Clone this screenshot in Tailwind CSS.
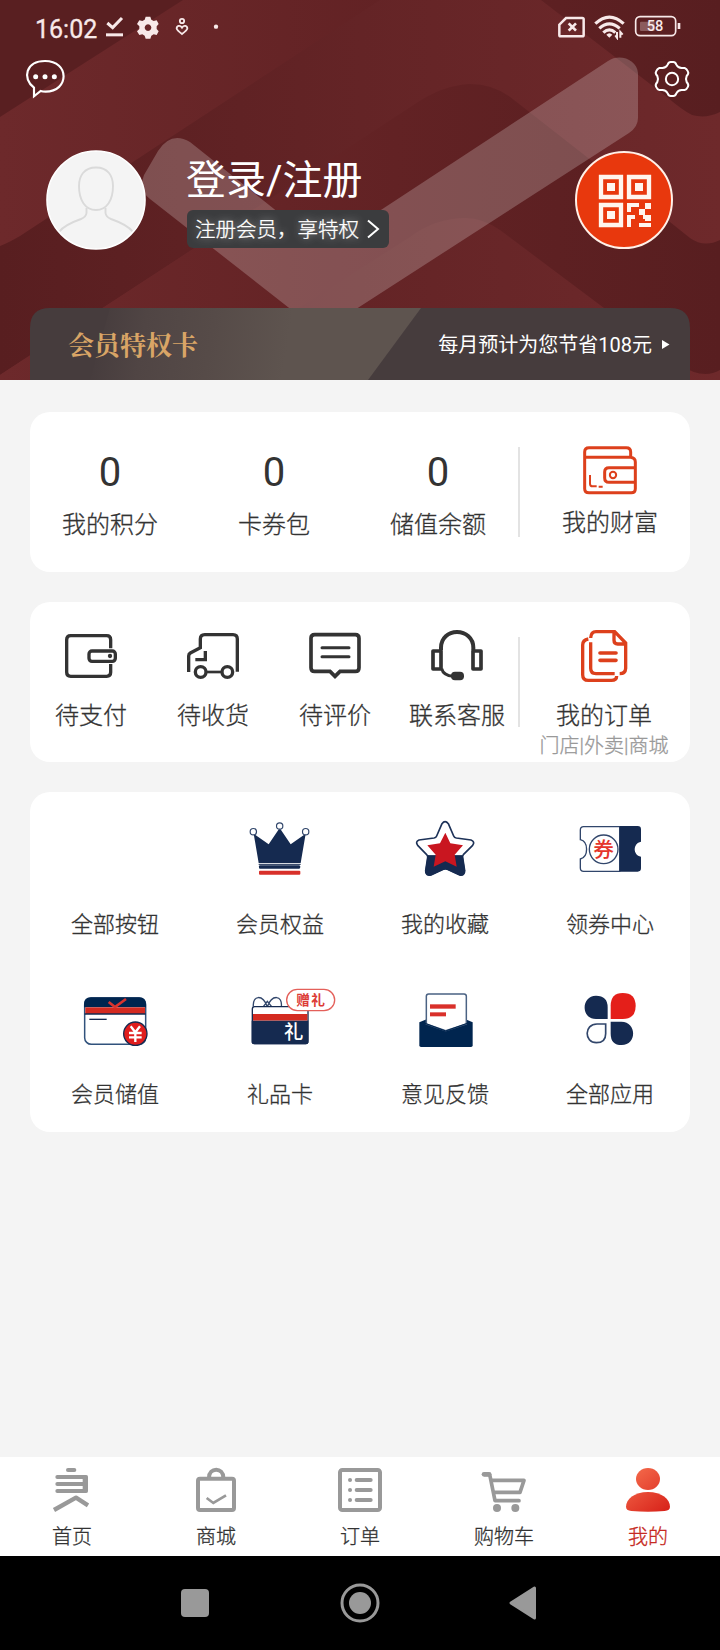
<!DOCTYPE html>
<html lang="zh-CN">
<head>
<meta charset="utf-8">
<title>我的</title>
<script src="https://cdn.jsdelivr.net/npm/@tailwindcss/browser@4"></script>
</head>
<body class="w-[720px] h-[1650px] overflow-hidden bg-[#f4f4f4] flex flex-col font-[Roboto,'Noto_Sans_CJK_SC',sans-serif] text-[#333] font-light">

<header class="relative h-[380px] shrink-0 overflow-hidden flex flex-col text-white">
  <svg class="absolute inset-0" width="720" height="380" viewBox="0 0 720 380">
    <defs>
      <linearGradient id="ld" gradientUnits="userSpaceOnUse" x1="0" x2="720" y1="0" y2="0">
        <stop offset="0" stop-color="#6d292b"/><stop offset=".55" stop-color="#622224"/><stop offset="1" stop-color="#581e20"/>
      </linearGradient>
      <linearGradient id="dl" gradientUnits="userSpaceOnUse" x1="0" x2="720" y1="0" y2="0">
        <stop offset="0" stop-color="#581e20"/><stop offset=".5" stop-color="#642426"/><stop offset="1" stop-color="#6e292b"/>
      </linearGradient>
      <linearGradient id="card" gradientUnits="userSpaceOnUse" x1="100" x2="290" y1="300" y2="330">
        <stop offset="0" stop-color="#463c3d"/><stop offset=".25" stop-color="#504544"/><stop offset=".6" stop-color="#564b48"/><stop offset="1" stop-color="#5e544f"/>
      </linearGradient>
    </defs>
    <rect width="720" height="380" fill="#591f21"/>
    <path d="M0 117L183 0H720V380H0Z" fill="url(#ld)"/>
    <path d="M0 246Q8 243 20 236L380 0H541L667 97Q682 110 692 115Q706 119 720 112V380H0Z" fill="url(#dl)"/>
    <path d="M0 375L415 104Q443 85 470 84Q495 84 514 100L670 222L690 238Q704 248 720 240V380H0Z" fill="url(#ld)"/>
    <path d="M230 352L410 237Q435 218 466 218Q482 218 500 230L680 365Q703 380 720 370V380H200Z" fill="url(#dl)"/>
    <path d="M0 375L230 225V380H0Z" fill="url(#ld)"/>
    <path d="M158 151Q171 131 190 142L323 248L608 61C620 53 637 60 638 73V118Q638 127 629 133L336 322H307L150 199Q138 190 144 175Z" fill="#fff" fill-opacity=".21"/>
    <path d="M30 380V328Q30 308 50 308H670Q690 308 690 328V380Z" fill="#463c3d"/>
    <path d="M90 380L110 308H421L368 380Z" fill="url(#card)"/>
  </svg>

  <div class="relative h-[53px] flex items-center justify-between pl-[35px] pr-[35px]">
    <div class="flex items-center">
      <span class="w-[65px] text-[25px] leading-none font-normal text-[#f8e9e9] pt-[5px] [-webkit-text-stroke:0.3px]">16:02</span>
      <svg width="124" height="27" viewBox="300 40 372 81" fill="#f8e9e9">
        <path d="M322 70L338 84L366 55" fill="none" stroke="#f8e9e9" stroke-width="9"/><rect x="318" y="101" width="51" height="9"/>
        <path fill-rule="evenodd" d="M437 51h14l3 9 7 4 9-2 6 11-6 7v8l6 7-6 11-9-2-7 4-3 9h-14l-3-9-7-4-9 2-7-11 7-7v-8l-7-7 7-11 9 2 7-4zM444 74a10 10 0 1 0 .1 0z"/>
        <g fill="none" stroke="#f8e9e9" stroke-width="5.500"><circle cx="546" cy="64" r="6.500"/><path d="M546 84C540 75 530 78 530 87Q531 92 546 103Q561 92 562 87C562 78 552 75 546 84Z"/></g>
        <circle cx="648" cy="81" r="6.500"/>
      </svg>
    </div>
    <svg width="130" height="27" viewBox="585 40 390 81" fill="none" stroke="#f8e9e9">
      <path d="M618 55H667Q671 55 671 59V106Q671 110 667 110H602Q598 110 598 106V75Z" stroke-width="7.500"/><path d="M626 71L648 93M648 71L626 93" stroke-width="8"/>
      <g stroke-width="9.500"><path d="M706 72Q748 33 791 72"/><path d="M718 86Q748 59 779 86"/><path d="M730 99Q748 82 766 99"/></g>
      <path d="M739 105Q748 96 757 105L748 114Z" fill="#f8e9e9" stroke="none"/><path d="M771 97V114L766 107M781 114V97L788 105" stroke-width="6"/>
      <rect x="827" y="51" width="120" height="57" rx="13" stroke-width="5"/><rect x="840" y="66" width="44" height="28" rx="3" fill="#8b5b5d" stroke="none"/><path d="M957 70V88" stroke-width="8"/>
      <text x="885" y="95" text-anchor="middle" font-family="Roboto, sans-serif" font-weight="500" font-size="44" fill="#f8e9e9" stroke="none">58</text>
    </svg>
  </div>

  <div class="relative h-[50px] flex justify-between pl-[24px] pr-[28px] pt-[5px]">
    <svg width="42" height="42" viewBox="72 174 126 126" fill="none" stroke="#fff" stroke-width="6.500" stroke-linejoin="miter">
      <path d="M102 263C65 235 78 183 135 183C210 183 208 275 137 275Q128 275 122 273L102 289Z"/>
      <g fill="#fff" stroke="none"><circle cx="107" cy="230" r="7.500"/><circle cx="135" cy="230" r="7.500"/><circle cx="163" cy="230" r="7.500"/></g>
    </svg>
    <svg width="40" height="42" viewBox="876 174 120 126" fill="none" stroke="#fff" stroke-width="6">
      <circle cx="936" cy="237" r="18.500"/>
      <path d="M923 194Q926 186 932 186H940Q946 186 949 194Q954 204 965 204L974 204Q980 206 984 215Q987 220 980 228Q976 237 980 246Q987 254 984 260Q980 269 974 270L965 270Q954 270 949 280Q946 288 940 288H932Q926 288 923 280Q918 270 907 270L898 270Q892 269 888 260Q885 254 892 246Q896 237 892 228Q885 220 888 215Q892 206 898 204L907 204Q918 204 923 194Z"/>
    </svg>
  </div>

  <div class="relative h-[205px] flex items-start px-[46px]">
    <svg class="mt-[47px]" width="100" height="100" viewBox="0 0 100 100">
      <defs><clipPath id="av"><circle cx="50" cy="50" r="48"/></clipPath></defs>
      <circle cx="50" cy="50" r="49" fill="#f4f4f4" stroke="#fff" stroke-width="1.600"/>
      <g clip-path="url(#av)" fill="none" stroke="#dadada" stroke-width="1.900"><path d="M50 17.500C38 17.500 33 26 33 36C33 50 39 60 50 60C61 60 67 50 67 36C67 26 62 17.500 50 17.500Z"/><path d="M40.500 58V63Q40 67 35 69Q18 75 13 82M59.500 58V63Q60 67 65 69Q82 75 87 82"/></g>
    </svg>
    <div class="ml-[41px] mt-[51px] flex flex-col items-start">
      <h1 class="text-[40px] leading-[50px] font-normal pt-[2px] -ml-px">登录/注册</h1>
      <div class="mt-[4px] h-[38px] w-[202px] rounded-[6px] bg-[#3b3c3e] flex items-center pl-[8px] text-[20.500px] font-light whitespace-nowrap [text-shadow:0_0_8px_#ffffff99] [-webkit-text-stroke:0.3px]"><span class="pt-[2px]">注册会员，享特权</span>
        <svg class="ml-[7px] shrink-0" width="14" height="20" viewBox="0 0 14 20" fill="none" stroke="#fff" stroke-width="2"><path d="M2 1.500L12 10L2 18.500"/></svg>
      </div>
    </div>
    <svg class="ml-[186px] mt-[48px] shrink-0" width="98" height="98" viewBox="645 453 294 294">
      <circle cx="792" cy="600" r="144" fill="#e8380d" stroke="#fff0e8" stroke-width="6"/>
      <g fill="none" stroke="#fff5ee" stroke-width="13"><path d="M723 531h60v60h-60zM807 531h60v60h-60zM723 615h60v60h-60z"/></g>
      <path fill="#fff5ee" d="M741 549h24v24h-24zM825 549h24v24h-24zM741 633h24v24h-24zM801 609h36v12h-24v15h-12zM855 609h18v18h-18zM837 627h18v18h-18zM801 645h24v12h-12v24h-12zM855 645h18v18h-18zM849 645h6v12h-6zM837 669h36v12h-36z"/>
    </svg>
  </div>

  <div class="relative mx-[30px] h-[72px] flex items-center justify-between pl-[38px] pr-[20px]">
    <span class="text-[26px] font-bold text-[#d9a566] pb-[2px] font-['Noto_Serif_CJK_SC','Noto_Sans_CJK_SC',serif]">会员特权卡</span>
    <span class="flex items-center text-[20px] font-normal"><span class="pt-[2px]">每月预计为您节省108元</span>
      <svg class="ml-[10px]" width="8" height="9" viewBox="0 0 8 9" fill="#fff"><path d="M0 0L7.500 4.500L0 9Z"/></svg>
    </span>
  </div>
</header>

<main class="flex-1 px-[30px] pt-[32px] flex flex-col gap-[30px] [-webkit-text-stroke:0.3px]">
  <section class="h-[160px] shrink-0 bg-white rounded-[20px] flex text-[24px]">
    <div class="w-[160px] flex flex-col items-center pt-[36px]"><b class="font-normal text-[40px] leading-[50px] [-webkit-text-stroke:0]">0</b><span class="mt-[11px] leading-[32px]">我的积分</span></div>
    <div class="w-[164px] pl-[4px] flex flex-col items-center pt-[36px]"><b class="font-normal text-[40px] leading-[50px] [-webkit-text-stroke:0]">0</b><span class="mt-[11px] leading-[32px]">卡券包</span></div>
    <div class="w-[164px] pl-[4px] flex flex-col items-center pt-[36px]"><b class="font-normal text-[40px] leading-[50px] [-webkit-text-stroke:0]">0</b><span class="mt-[11px] leading-[32px]">储值余额</span></div>
    <div class="w-[2px] h-[90px] mt-[35px] bg-[#e3e3e3]"></div>
    <div class="flex-1 flex flex-col items-center pl-[10px] pt-[28px]">
      <svg width="60" height="60" viewBox="660 120 180 180" fill="none" stroke="#dd401c" stroke-width="9">
        <path d="M674 172V156Q674 143 687 143H799Q812 143 812 156V171M674 172H812Q826 174 826 186V266Q826 278 814 278H687Q674 278 674 266Z"/>
        <path d="M826 203H747Q734 203 734 216V234Q734 247 747 247H826"/><circle cx="759" cy="225" r="9.500" stroke-width="6"/><path d="M690 225V251Q690 259 698 259H710M716 260H728" stroke-width="6"/>
      </svg>
      <span class="mt-[7px] leading-[32px]">我的财富</span>
    </div>
  </section>

  <section class="h-[160px] shrink-0 bg-white rounded-[20px] flex text-[24px]">
    <div class="w-[122px] flex flex-col items-center pt-[23px]">
      <svg width="60" height="60" viewBox="183 105 180 180" fill="none" stroke="#333" stroke-width="10">
        <path d="M332 175V149Q332 137 320 137H212Q200 137 200 149V247Q200 259 212 259H320Q332 259 332 247V222"/><rect x="267" y="183" width="79" height="31" rx="9"/><circle cx="330" cy="198" r="6.500" fill="#333" stroke="none"/>
      </svg><span class="mt-[15px] leading-[32px]">待支付</span></div>
    <div class="w-[122px] flex flex-col items-center pt-[23px]">
      <svg width="60" height="60" viewBox="549 105 180 180" fill="none" stroke="#333" stroke-width="10">
        <path d="M712 245V147Q712 134 699 134H614Q601 134 601 147V173L571 189Q566 192 566 198V246M616 183V209H586"/><path d="M620 246H663" stroke-width="8"/><circle cx="602" cy="246" r="16"/><circle cx="682" cy="246" r="16"/>
      </svg><span class="mt-[15px] leading-[32px]">待收货</span></div>
    <div class="w-[122px] flex flex-col items-center pt-[23px]">
      <svg width="60" height="60" viewBox="915 105 180 180" fill="none" stroke="#333" stroke-width="11">
        <path d="M944 134H1066Q1077 134 1077 145V233Q1077 244 1066 244H1020L1005 259L990 244H944Q933 244 933 233V145Q933 134 944 134Z"/><path d="M966 173H1047M966 200H1047" stroke-linecap="round" stroke-width="9"/>
      </svg><span class="mt-[15px] leading-[32px]">待评价</span></div>
    <div class="w-[122px] flex flex-col items-center pt-[23px]">
      <svg width="60" height="60" viewBox="201 105 180 180" fill="none" stroke="#333" stroke-width="12">
        <path d="M243 181V173C243 144 265 126 291 126C317 126 340 144 340 173V181"/><path d="M219 183H243V237H219ZM339 183H363V237H339Z" stroke-width="11" stroke-linejoin="round"/><path d="M245 236Q250 257 280 259" stroke-width="9"/><rect x="273" y="245" width="39" height="26" rx="12" fill="#333" stroke="none"/>
      </svg><span class="mt-[15px] leading-[32px]">联系客服</span></div>
    <div class="w-[2px] h-[90px] mt-[35px] bg-[#e3e3e3]"></div>
    <div class="flex-1 flex flex-col items-center pr-[2px] pt-[23px]">
      <svg width="60" height="60" viewBox="642 105 180 180" fill="none" stroke="#dd401c" stroke-width="10">
        <path d="M692 144Q693 125 708 125H764L797 159V235Q796 251 779 251M762 127V151Q762 162 773 162H797M692 157V235Q692 251 708 251H764M685 147Q668 150 668 165V254Q668 271 685 271H754Q770 271 770 258"/><path d="M720 189H768M720 211H768" stroke-linecap="round" stroke-width="11"/>
      </svg><span class="mt-[15px] leading-[32px]">我的订单</span><span class="mt-[2px] text-[20px] leading-[24px] text-[#999] whitespace-nowrap">门店|外卖|商城</span></div>
  </section>

  <section class="h-[340px] shrink-0 bg-white rounded-[20px] grid grid-cols-[repeat(4,165px)] auto-rows-[170px] pt-[24px] pl-[2.500px] text-[22px] [&>div]:flex [&>div]:flex-col [&>div]:items-center [&>div]:gap-[23px] leading-[32px]">
    <div><div class="h-[70px]"></div><span>全部按钮</span></div>
    <div>
      <svg width="120" height="70" viewBox="660 78 360 210">
        <path d="M761 131L806 163L839 114L872 163L917 131L902 219H776Z" fill="#152a50"/><path d="M776 223H902M777 231H901" stroke="#152a50" stroke-width="3"/><rect x="777" y="226" width="123" height="10" rx="3" fill="#152a50"/><rect x="777" y="242" width="124" height="12" rx="3" fill="#d8302a"/>
        <g fill="#fff" stroke="#31466b" stroke-width="3.500"><circle cx="760" cy="125" r="9.500"/><circle cx="839" cy="108" r="9.500"/><circle cx="917" cy="125" r="9.500"/></g>
      </svg><span>会员权益</span></div>
    <div>
      <svg width="120" height="70" viewBox="75 78 360 210" stroke-linejoin="round">
        <path d="M246 101Q255 89 265 101L281 138Q283 143 289 144L333 150Q346 155 338 166L310 194Q307 198 308 203L314 242Q314 258 299 255L262 238Q256 235 250 238L213 255Q196 258 197 242L203 203Q204 198 200 194L173 166Q165 155 177 150L222 144Q228 143 230 138Z" fill="#fff" stroke="#1d3258" stroke-width="5"/>
        <path d="M204 197H307Q307 200 308 203L314 242Q314 258 299 255L262 238Q256 235 250 238L213 255Q196 258 197 242Z" fill="#152a50" stroke="#152a50" stroke-width="3"/>
        <path d="M256 128L271 160L309 166L284 194L290 230L256 214L221 230L227 194L202 166L240 160Z" fill="#c91620"/>
      </svg><span>我的收藏</span></div>
    <div>
      <svg width="120" height="70" viewBox="570 78 360 210">
        <path d="M671 110H779V244H671Q661 244 661 234V207C686 200 686 155 661 149V120Q661 110 671 110Z" fill="#fff" stroke="#31466b" stroke-width="4"/>
        <path d="M779 108H833Q843 108 843 118V155C818 160 818 195 843 200V235Q843 245 833 245H779Z" fill="#152a50"/><circle cx="731" cy="178" r="43" fill="#fff" stroke="#31466b" stroke-width="4"/>
        <text x="731" y="201" text-anchor="middle" font-family="Noto Sans CJK SC, sans-serif" font-weight="500" font-size="62" fill="#e5352b">券</text>
      </svg><span>领券中心</span></div>
    <div>
      <svg width="120" height="70" viewBox="165 588 360 210">
        <rect x="254" y="624" width="183" height="139" rx="20" fill="#fff" stroke="#31527c" stroke-width="4.500"/><path d="M252 652V642Q252 622 272 622H418Q438 622 438 642V652Z" fill="#00254f"/><rect x="256" y="652" width="179" height="20" fill="#d42a20"/><path d="M254 672H437" stroke="#152a50" stroke-width="4"/><path d="M326 636L345 651L378 627" fill="none" stroke="#d9342e" stroke-width="8"/><path d="M268 688H320" stroke="#152a50" stroke-width="4"/>
        <circle cx="406" cy="731" r="35" fill="#e01d1d" stroke="#152a50" stroke-width="4"/><path d="M392 709L406 727L420 709M387 729H425M387 742H425M406 725V756" fill="none" stroke="#fff" stroke-width="7"/>
      </svg><span>会员储值</span></div>
    <div>
      <svg width="120" height="70" viewBox="660 588 360 210">
        <g fill="none" stroke="#31466b" stroke-width="4"><path d="M760 650C757 615 788 612 802 650C816 612 848 615 844 650M790 650L802 634L815 650"/></g>
        <rect x="757" y="650" width="167" height="111" rx="7" fill="#fff" stroke="#152a50" stroke-width="4"/><rect x="759" y="672" width="163" height="20" fill="#d42a20"/><path d="M755 692H925V757Q925 763 918 763H762Q755 763 755 757Z" fill="#152a50"/>
        <text x="881" y="746" text-anchor="middle" font-family="Noto Sans CJK SC, sans-serif" font-weight="500" font-size="58" fill="#fff">礼</text>
        <rect x="860" y="598" width="144" height="64" rx="32" fill="#fff" stroke="#e4605a" stroke-width="4"/><text x="934" y="645" text-anchor="middle" font-family="Noto Sans CJK SC, sans-serif" font-weight="700" font-size="41" letter-spacing="4" fill="#dc3b35">赠礼</text>
      </svg><span>礼品卡</span></div>
    <div>
      <svg width="120" height="70" viewBox="75 588 360 210">
        <path d="M178 697L200 688H316L338 697V766Q338 771 333 771H183Q178 771 178 766Z" fill="#00254f"/><path d="M199 702V619Q199 612 206 612H312Q319 612 319 619V702L257 722Z" fill="#fff" stroke="#4a6283" stroke-width="4.500"/><path d="M187 697L257 723L330 697" fill="none" stroke="#00254f" stroke-width="3"/><rect x="210" y="643" width="77" height="13" fill="#d9302a"/><rect x="210" y="667" width="48" height="12" fill="#d9302a"/>
      </svg><span>意见反馈</span></div>
    <div>
      <svg width="120" height="70" viewBox="570 588 360 210">
        <path d="M743 687H708C662 687 663 617 708 617Q743 617 743 652ZM752 695H784C831 695 831 765 785 765Q752 765 752 731Z" fill="#152a50"/><path d="M752 687V648Q752 609 788 609Q827 609 827 648Q827 687 788 687Z" fill="#e41f1a"/><path d="M737 702H711C672 702 672 758 709 758Q737 758 737 731Z" fill="#fff" stroke="#31466b" stroke-width="5"/>
      </svg><span>全部应用</span></div>
  </section>
</main>

<nav class="h-[99px] shrink-0 bg-white flex text-[20px] leading-[28px] [-webkit-text-stroke:0.3px] [&>div]:w-[144px] [&>div]:flex [&>div]:flex-col [&>div]:items-center [&>div]:pt-[8px] [&>div]:gap-[8px]">
  <div><svg width="60" height="50" viewBox="126 75 180 150" fill="none" stroke="#999" stroke-width="12"><path d="M204 90H223" stroke-linecap="round"/><path d="M172 111H258V153H172M172 132H255" stroke-linecap="round" stroke-linejoin="round"/><path d="M255 107V157" stroke-width="14"/><path d="M162 210L228 173L264 196" stroke-linejoin="round" stroke-width="13"/></svg><span>首页</span></div>
  <div><svg width="60" height="50" viewBox="558 75 180 150" fill="none" stroke="#999" stroke-width="12"><rect x="594" y="116" width="108" height="94" rx="6"/><path d="M627 113C627 81 670 81 670 113"/><path d="M620 174L640 189L678 166" stroke-width="8"/></svg><span>商城</span></div>
  <div><svg width="60" height="50" viewBox="990 75 180 150" fill="none" stroke="#999" stroke-width="12"><rect x="1020" y="90" width="120" height="120" rx="7"/><path d="M1050 120H1050.100M1050 150H1050.100M1050 180H1050.100M1070 120H1112M1070 150H1112M1070 180H1112" stroke-linecap="round"/></svg><span>订单</span></div>
  <div><svg width="60" height="50" viewBox="342 75 180 150" fill="none" stroke="#999" stroke-width="11"><path d="M373 103H389L405 182H477" stroke-linecap="round" stroke-linejoin="round" stroke-width="11"/><path d="M372 103H387" stroke-width="14" stroke-linecap="round"/><path d="M394 121H492L480 157H400" stroke-linejoin="round"/><g fill="#999" stroke="none"><circle cx="411" cy="204" r="12"/><circle cx="466" cy="204" r="12"/></g></svg><span>购物车</span></div>
  <div><svg width="60" height="50" viewBox="774 75 180 150"><defs><linearGradient id="me" gradientUnits="userSpaceOnUse" x1="820" y1="90" x2="915" y2="215"><stop offset="0" stop-color="#f4694a"/><stop offset="1" stop-color="#d8241b"/></linearGradient></defs><g fill="url(#me)"><ellipse cx="864" cy="117" rx="36" ry="33"/><path d="M864 156C905 156 930 178 930 200Q930 211 914 213Q864 218 814 213Q798 211 798 200C798 178 823 156 864 156Z"/></g></svg><span class="text-[#c62a22]">我的</span></div>
</nav>

<footer class="h-[94px] shrink-0 bg-black flex items-center pl-[181px]">
  <div class="size-[28px] rounded-[4px] bg-[#999]"></div>
  <svg class="ml-[131px]" width="40" height="40" viewBox="0 0 40 40"><circle cx="20" cy="20" r="18" fill="none" stroke="#999" stroke-width="3"/><circle cx="20" cy="20" r="11" fill="#999"/></svg>
  <svg class="ml-[129px]" width="27" height="34" viewBox="0 0 27 34"><path d="M25.500 2V32L2 17Z" fill="#999" stroke="#999" stroke-width="3" stroke-linejoin="round"/></svg>
</footer>
</body>
</html>
